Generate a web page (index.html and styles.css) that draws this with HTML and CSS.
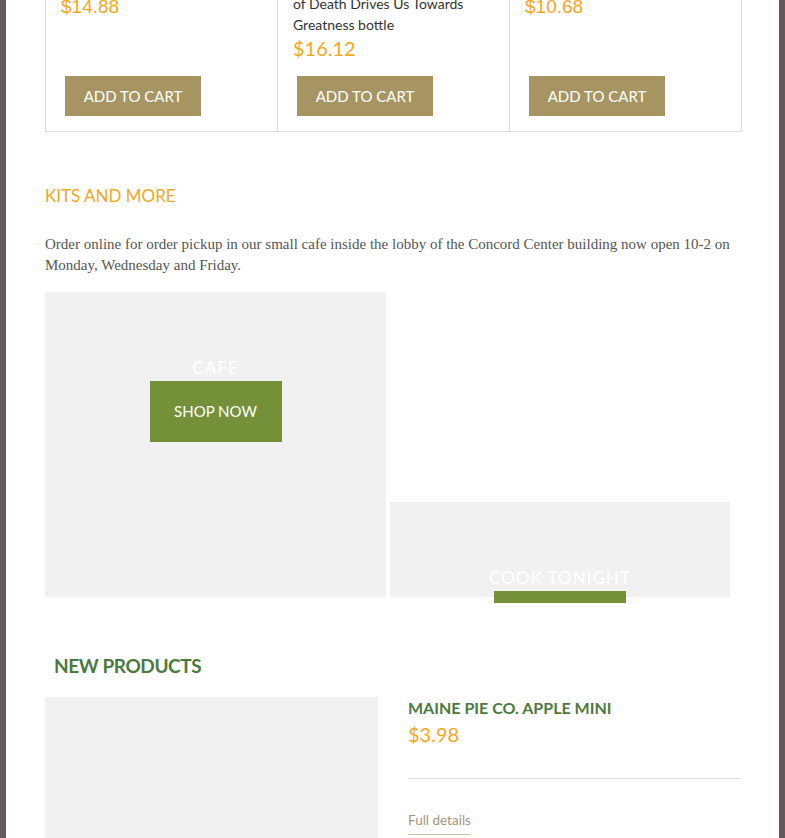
FILE: index.html
```html
<!DOCTYPE html>
<html lang="en">
<head>
    <meta charset="UTF-8">
    <meta name="viewport" content="width=device-width, initial-scale=1.0">
    <title>Kits and More</title>
    <link rel="stylesheet" href="styles.css">
</head>
<body>
    <div class="page">
        <div class="featured">
            <div class="card">
                <h3 class="card-title">Maine Root Ginger Brew<br>bottle</h3>
                <div class="price price-plain">$14.88</div>
                <button class="cart-btn">Add to cart</button>
            </div>
            <div class="card">
                <h3 class="card-title">Allagash Brewing Company<br>The Inevitability<br>of Death Drives Us Towards<br>Greatness bottle</h3>
                <div class="price">$16.12</div>
                <button class="cart-btn">Add to cart</button>
            </div>
            <div class="card">
                <h3 class="card-title">Oxbow Farmhouse Pale<br>Ale can</h3>
                <div class="price price-plain">$10.68</div>
                <button class="cart-btn">Add to cart</button>
            </div>
        </div>

        <div class="kits">
            <h2 class="section-title">Kits and More</h2>
            <p class="intro">Order online for order pickup in our small cafe inside the lobby of the Concord Center building now open 10-2 on Monday, Wednesday and Friday.</p>
            <div class="tiles">
                <div class="tile">
                    <div class="tile-caption">
                        <div class="tile-name">Cafe</div>
                        <a class="shop-btn" href="#">Shop now</a>
                    </div>
                </div>
                <div class="tile tile-short">
                    <div class="tile-caption">
                        <div class="tile-name">Cook Tonight</div>
                        <a class="shop-btn" href="#">Shop now</a>
                    </div>
                </div>
            </div>
        </div>

        <div class="new-products">
            <h2 class="new-title">New Products</h2>
            <div class="product">
                <div class="product-image"></div>
                <div class="product-info">
                    <h3 class="product-name">Maine Pie Co. Apple Mini</h3>
                    <div class="product-price">$3.98</div>
                    <hr class="divider">
                    <a class="details-link" href="#">Full details</a>
                </div>
            </div>
        </div>
    </div>
</body>
</html>
```

FILE: styles.css
```css
body {
    margin: 0;
    background: #ffffff;
    font-family: 'Lato', 'Open Sans', sans-serif;
    overflow: hidden;
}
.page {
    min-height: 100vh;
    border-left: 6px solid #665b5b;
    border-right: 6px solid #665b5b;
    padding: 0 38px 0 39px;
    overflow: hidden;
}

/* featured product row (page is scrolled past its top) */
.featured {
    margin-top: -67px;
    width: 697px;
    display: grid;
    grid-template-columns: 232px 232px 233px;
    border: 1px solid #dddddd;
    box-sizing: border-box;
}
.card {
    display: flex;
    flex-direction: column;
    align-items: flex-start;
    padding: 17px 16px 15px 15px;
    border-right: 1px solid #dddddd;
}
.card:last-child {
    border-right: none;
}
.card-title {
    margin: 0;
    font-size: 14px;
    font-weight: normal;
    line-height: 21px;
    color: #333333;
}
.price {
    font-size: 20px;
    line-height: 26px;
    color: #f5a623;
}
.price-plain {
    padding-top: 2px;
    font-family: 'Liberation Sans', Arial, sans-serif;
    font-size: 19px;
    line-height: 24px;
}
.cart-btn {
    margin: auto 0 0 4px;
    width: 136px;
    height: 40px;
    border: none;
    background: #a69562;
    color: #ffffff;
    font-family: 'Lato', sans-serif;
    font-size: 15px;
    text-transform: uppercase;
    padding: 0;
}
.card:nth-child(2) .cart-btn {
    margin-top: 15px;
}

/* kits */
.kits {
    padding-top: 52px;
}
.section-title {
    margin: 0;
    font-size: 17px;
    font-weight: normal;
    line-height: 24px;
    color: #f5a623;
    text-transform: uppercase;
}
.intro {
    margin: 26px 0 16px;
    font-family: 'Liberation Serif', 'Times New Roman', serif;
    font-size: 15px;
    line-height: 21px;
    color: #555555;
}
.tiles {
    display: grid;
    grid-template-columns: 341px 340px;
    gap: 4px;
    align-items: start;
    height: 311px;
    overflow: hidden;
}
.tile {
    position: relative;
    height: 305px;
    background: #f1f1f1;
}
.tile-short {
    margin-top: 210px;
    height: 95px;
}
.tile-caption {
    position: absolute;
    top: 65px;
    left: 0;
    right: 0;
    display: flex;
    flex-direction: column;
    align-items: center;
}
.tile-name {
    margin-bottom: 2px;
    font-size: 17px;
    line-height: 22px;
    letter-spacing: 1px;
    color: #ffffff;
    text-transform: uppercase;
}
.shop-btn {
    display: block;
    width: 132px;
    height: 61px;
    line-height: 61px;
    background: #74913a;
    color: #ffffff;
    font-size: 15px;
    text-align: center;
    text-decoration: none;
    text-transform: uppercase;
}

/* new products */
.new-title {
    margin: 49px 0 17px;
    padding-left: 9px;
    font-size: 19px;
    font-weight: bold;
    line-height: 28px;
    letter-spacing: -0.4px;
    color: #4b7a3f;
    text-transform: uppercase;
}
.product {
    display: grid;
    grid-template-columns: 333px 333px;
    gap: 30px;
}
.product-image {
    height: 333px;
    background: #f1f1f1;
}
.product-name {
    margin: 0;
    font-size: 16px;
    font-weight: bold;
    line-height: 22px;
    color: #4b7a3f;
    text-transform: uppercase;
}
.product-price {
    margin-top: 2px;
    font-size: 20px;
    line-height: 26px;
    color: #f5a623;
}
.divider {
    margin: 31px 0 30px;
    border: none;
    border-top: 1px solid #dddddd;
}
.details-link {
    display: inline-block;
    padding-bottom: 4px;
    border-bottom: 1px solid #c9c0a8;
    font-size: 13.5px;
    line-height: 20px;
    color: #a3967a;
    text-decoration: none;
}
```
